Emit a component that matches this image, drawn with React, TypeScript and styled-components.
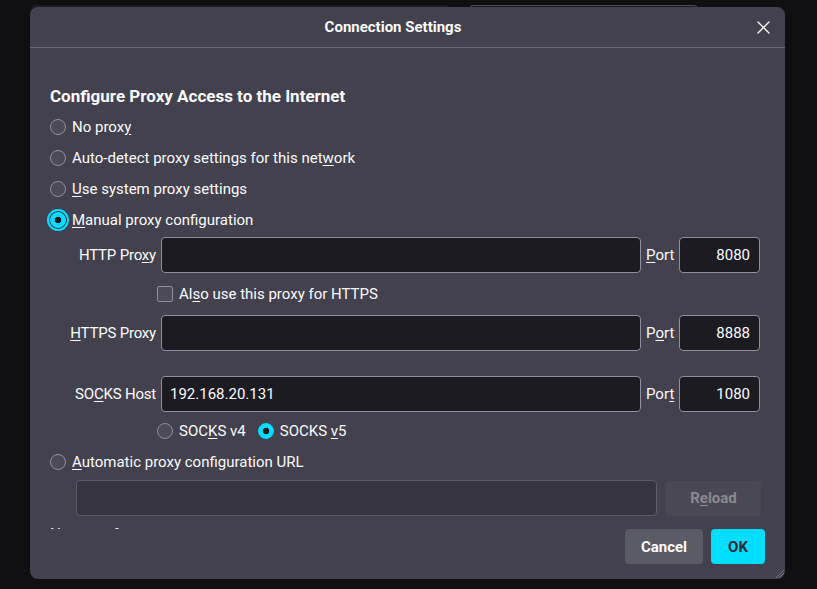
import React from "react";
import styled, { createGlobalStyle } from "styled-components";

const FONT = `Roboto, "Noto Sans", "Liberation Sans", sans-serif`;

const Global = createGlobalStyle`
  html, body { margin: 0; padding: 0; background: #0f0f11; }
  body { font-family: ${FONT}; color: #fbfbfe; }
  * { box-sizing: border-box; }
  u { text-decoration-thickness: 1px; text-underline-offset: 2px; }
`;

const Page = styled.div`
  position: relative;
  width: 817px;
  height: 589px;
  overflow: hidden;
  background: #0f0f11;
`;

const TopStrip = styled.div`
  display: flex;
  padding-top: 5px;
`;

const BgPanel = styled.div`
  margin-left: 31px;
  width: 419px;
  height: 30px;
  background: #1c1b22;
  border-radius: 4px 4px 0 0;
`;

const BgSearch = styled.div`
  margin-left: 19px;
  width: 229px;
  height: 30px;
  border: 1px solid #4f4e57;
  border-radius: 4px;
  background: #1c1b22;
`;

const Dialog = styled.div`
  position: absolute;
  left: 30px;
  top: 7px;
  width: 755px;
  height: 572px;
  background: #42414d;
  border-radius: 8px;
  display: flex;
  flex-direction: column;
  overflow: hidden;
`;

const Header = styled.div`
  height: 41px;
  flex: none;
  display: flex;
  align-items: center;
  padding-left: 5px;
  border-bottom: 1px solid #6b6a73;
`;

const Title = styled.div`
  flex: 1;
  text-align: center;
  font-size: 15px;
  font-weight: 700;
  line-height: 40px;
`;

const CloseButton = styled.div`
  flex: none;
  margin-right: 10px;
  width: 24px;
  height: 24px;
  display: flex;
  align-items: center;
  justify-content: center;
`;

const Body = styled.div`
  flex: 1;
  min-height: 0;
  overflow: hidden;
  padding: 33px 20px 0 20px;
  display: flex;
  flex-direction: column;
  font-size: 15px;
  & > * { flex: none; }
`;

const Heading = styled.div`
  height: 30px;
  display: flex;
  align-items: center;
  font-size: 17px;
  font-weight: 700;
`;

const OptionRow = styled.div<{ $h?: number }>`
  height: ${(p) => p.$h ?? 31}px;
  display: flex;
  align-items: center;
  gap: 6px;
`;

const RadioCircle = styled.span<{ $checked?: boolean; $focused?: boolean }>`
  width: 16px;
  height: 16px;
  flex: none;
  border-radius: 50%;
  border: 1px solid ${(p) => (p.$checked ? "#00ddff" : "#8f8f9d")};
  background: ${(p) =>
    p.$checked
      ? "radial-gradient(circle, #1c1b22 0 3px, #00ddff 3.6px)"
      : "rgba(251,251,254,0.05)"};
  ${(p) => (p.$focused ? "outline: 2px solid #00ddff; outline-offset: 1px;" : "")}
`;

const CheckBox = styled.span`
  width: 16px;
  height: 16px;
  flex: none;
  border-radius: 2px;
  border: 1px solid #8f8f9d;
  background: rgba(251, 251, 254, 0.05);
`;

const Grid = styled.div`
  margin-top: 2px;
  margin-left: 16px;
  display: grid;
  grid-template-columns: 90px 480px 28px 81px;
  column-gap: 5px;
  align-items: center;
`;

const FieldLabel = styled.div<{ $start?: boolean }>`
  justify-self: ${(p) => (p.$start ? "start" : "end")};
  white-space: nowrap;
  letter-spacing: ${(p) => (p.$start ? "0" : "-0.2px")};
`;

const TextInput = styled.div<{ $align?: "left" | "right" }>`
  height: 36px;
  background: #1c1b22;
  border: 1px solid #8f8f9d;
  border-radius: 4px;
  display: flex;
  align-items: center;
  justify-content: ${(p) => (p.$align === "right" ? "flex-end" : "flex-start")};
  padding: 0 9px 0 8px;
  font-size: 15px;
`;

const GridLine = styled.div<{ $h: number }>`
  grid-column: 2 / span 3;
  height: ${(p) => p.$h}px;
  display: flex;
  align-items: center;
  gap: 6px;
  margin-left: -4px;
`;

const Spacer = styled.div<{ $h: number }>`
  grid-column: 1 / -1;
  height: ${(p) => p.$h}px;
`;

const Gap = styled.span`
  width: 0;
`;

const UrlRow = styled.div`
  margin-top: 6px;
  margin-left: 26px;
  display: flex;
  align-items: center;
  gap: 9px;
`;

const UrlInput = styled.div`
  width: 581px;
  height: 36px;
  background: #36353f;
  border: 1px solid #5e5d66;
  border-radius: 4px;
`;

const ReloadButton = styled.div`
  width: 95px;
  height: 35px;
  border-radius: 4px;
  background: #4a4953;
  color: #8a8990;
  font-weight: 700;
  display: flex;
  align-items: center;
  justify-content: center;
`;

const CutText = styled.div`
  margin-top: 7px;
  line-height: 22px;
`;

const Footer = styled.div`
  height: 50px;
  flex: none;
  display: flex;
  justify-content: flex-end;
  align-items: flex-start;
  gap: 8px;
  padding: 0 20px;
`;

const Button = styled.div<{ $primary?: boolean; $w: number }>`
  width: ${(p) => p.$w}px;
  height: 35px;
  border-radius: 4px;
  background: ${(p) => (p.$primary ? "#00ddff" : "#5b5b66")};
  color: ${(p) => (p.$primary ? "#2b2a33" : "#fbfbfe")};
  font-size: 15px;
  font-weight: 700;
  display: flex;
  align-items: center;
  justify-content: center;
`;

const Grip = styled.svg`
  position: absolute;
  right: 0;
  bottom: 0;
`;

const Radio = ({
  checked,
  focused,
  children,
}: {
  checked?: boolean;
  focused?: boolean;
  children: React.ReactNode;
}) => (
  <>
    <RadioCircle $checked={checked} $focused={focused} />
    <span>{children}</span>
  </>
);

export default function App() {
  return (
    <Page>
      <Global />
      <TopStrip>
        <BgPanel />
        <BgSearch />
      </TopStrip>
      <Dialog>
        <Header>
          <Title>Connection Settings</Title>
          <CloseButton>
            <svg width="13" height="13" viewBox="0 0 13 13">
              <path d="M1 1L12 12M12 1L1 12" stroke="#fbfbfe" strokeWidth="1.3" strokeLinecap="round" />
            </svg>
          </CloseButton>
        </Header>
        <Body>
          <Heading>Configure Proxy Access to the Internet</Heading>
          <OptionRow>
            <Radio>No prox<u>y</u></Radio>
          </OptionRow>
          <OptionRow>
            <Radio>Auto-detect proxy settings for this net<u>w</u>ork</Radio>
          </OptionRow>
          <OptionRow>
            <Radio><u>U</u>se system proxy settings</Radio>
          </OptionRow>
          <OptionRow>
            <Radio checked focused><u>M</u>anual proxy configuration</Radio>
          </OptionRow>
          <Grid>
            <FieldLabel>HTTP Pro<u>x</u>y</FieldLabel>
            <TextInput />
            <FieldLabel $start><u>P</u>ort</FieldLabel>
            <TextInput $align="right">8080</TextInput>

            <GridLine $h={42}>
              <CheckBox />
              <span>Al<u>s</u>o use this proxy for HTTPS</span>
            </GridLine>

            <FieldLabel><u>H</u>TTPS Proxy</FieldLabel>
            <TextInput />
            <FieldLabel $start>P<u>o</u>rt</FieldLabel>
            <TextInput $align="right">8888</TextInput>

            <Spacer $h={25} />

            <FieldLabel>SO<u>C</u>KS Host</FieldLabel>
            <TextInput>192.168.20.131</TextInput>
            <FieldLabel $start>Por<u>t</u></FieldLabel>
            <TextInput $align="right">1080</TextInput>

            <GridLine $h={38}>
              <Radio>SOC<u>K</u>S v4</Radio>
              <Gap />
              <Radio checked>SOCKS <u>v</u>5</Radio>
            </GridLine>
          </Grid>
          <OptionRow $h={24}>
            <Radio><u>A</u>utomatic proxy configuration URL</Radio>
          </OptionRow>
          <UrlRow>
            <UrlInput />
            <ReloadButton>R<u>e</u>load</ReloadButton>
          </UrlRow>
          <CutText>No proxy for</CutText>
        </Body>
        <Footer>
          <Button $w={78}>Cancel</Button>
          <Button $w={54} $primary>OK</Button>
        </Footer>
        <Grip width="12" height="12" viewBox="0 0 12 12">
          <path d="M11 3L3 11M11 6L6 11M11 9L9 11" stroke="#7a7982" strokeWidth="1" />
        </Grip>
      </Dialog>
    </Page>
  );
}
